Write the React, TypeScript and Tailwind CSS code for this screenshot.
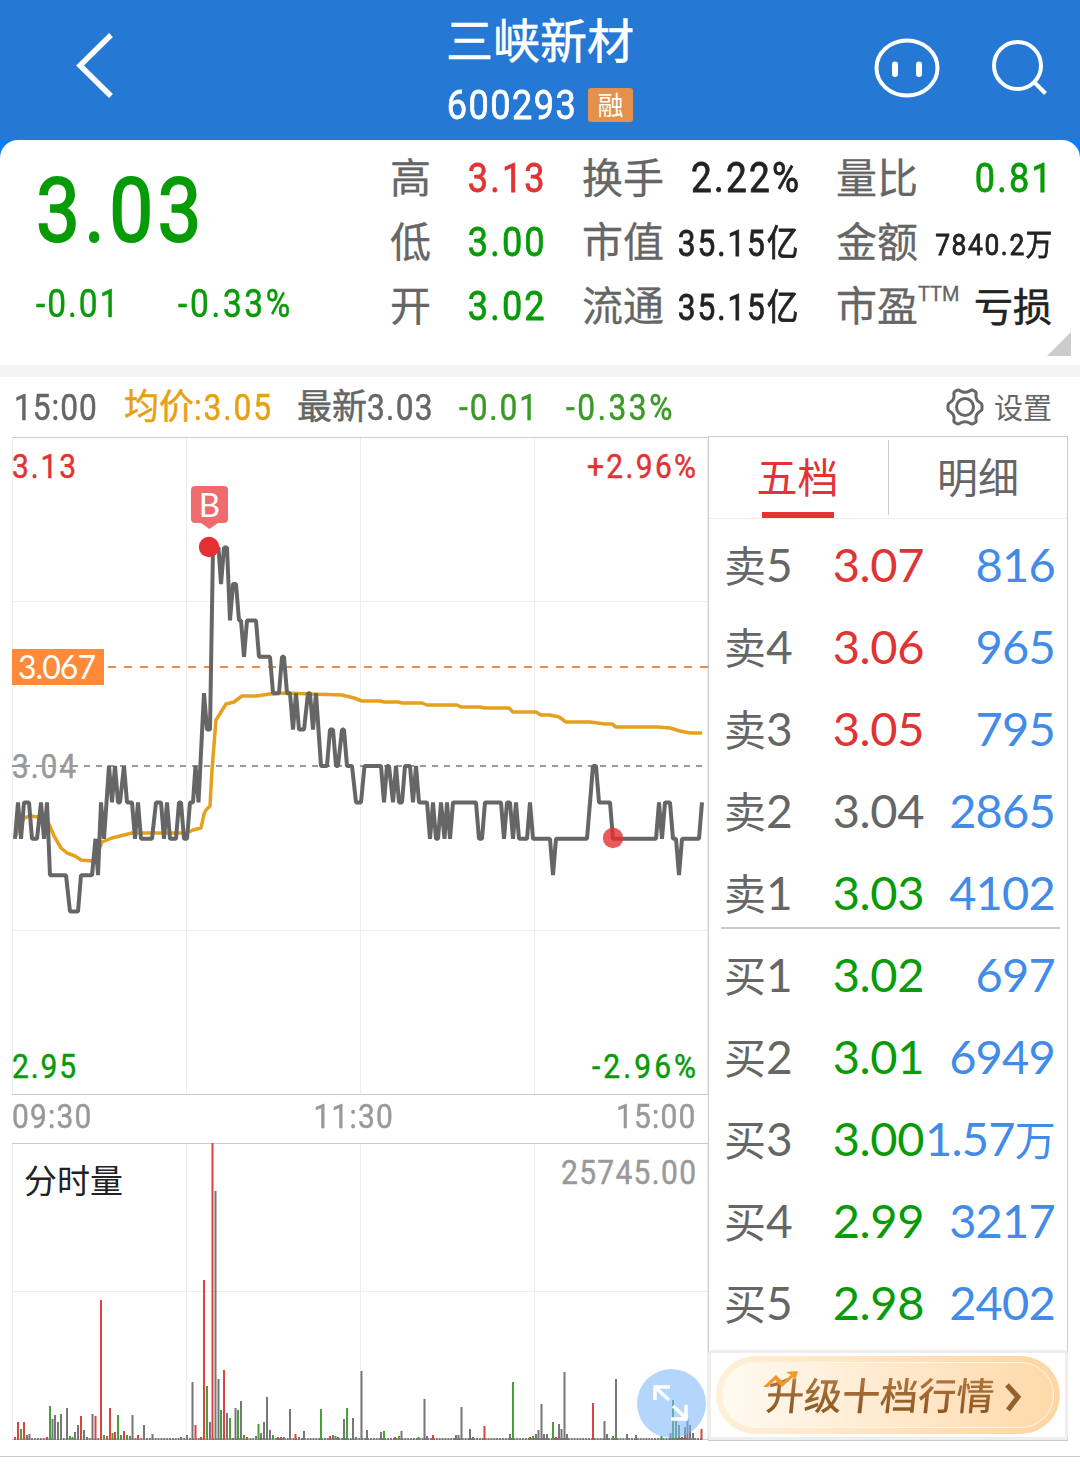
import React from 'react';

type Tone = 'up' | 'down' | 'flat';
type Bar = [number, number, 'r' | 'g' | 'k'];

interface Quote {
  label: string;
  level: string;
  price: string;
  tone: Tone;
  volume: string;
}

const toneClass: Record<Tone, string> = {
  up: 'text-[#e03333]',
  down: 'text-[#079b07]',
  flat: 'text-[#666666]',
};

const barColor = { r: '#dc4444', g: '#48a03c', k: '#777777' };

const sells: Quote[] = [
  { label: '卖', level: '5', price: '3.07', tone: 'up', volume: '816' },
  { label: '卖', level: '4', price: '3.06', tone: 'up', volume: '965' },
  { label: '卖', level: '3', price: '3.05', tone: 'up', volume: '795' },
  { label: '卖', level: '2', price: '3.04', tone: 'flat', volume: '2865' },
  { label: '卖', level: '1', price: '3.03', tone: 'down', volume: '4102' },
];

const buys: Quote[] = [
  { label: '买', level: '1', price: '3.02', tone: 'down', volume: '697' },
  { label: '买', level: '2', price: '3.01', tone: 'down', volume: '6949' },
  { label: '买', level: '3', price: '3.00', tone: 'down', volume: '1.57万' },
  { label: '买', level: '4', price: '2.99', tone: 'down', volume: '3217' },
  { label: '买', level: '5', price: '2.98', tone: 'down', volume: '2402' },
];

// [x, ticks above or below the previous close]
const prices: [number, number][] = [
  [15, -2], [18, -1], [21, -2], [24, -1], [29, -1], [32, -2], [37, -2], [41, -1], [44, -2], [47, -1],
  [50, -3], [66, -3], [70, -4], [78, -4], [81, -3], [92, -3], [95.5, -2], [98, -3], [101, -1], [104, -2],
  [109, 0], [112, -1], [115, 0], [118, -1], [120, -1], [124, 0], [127, -1], [132, -1], [135, -2], [138, -1],
  [141, -2], [152, -2], [156, -1], [161, -1], [164, -2], [167, -1], [170, -2], [176, -2], [179, -1], [181, -1],
  [184, -2], [187, -2], [190, -1], [193, -1], [195.5, 0], [198.5, -1], [204, 2], [207, 1], [210, 1], [213, 6],
  [218.5, 6], [221, 5], [224, 6], [227, 6], [230, 4], [233, 5], [236, 5], [239, 4], [241, 4], [244, 3],
  [247, 4], [256, 4], [259, 3], [270, 3], [273, 2], [279, 2], [282, 3], [284, 3], [287, 2], [290, 2],
  [293, 1], [296, 2], [299, 1], [304, 1], [308, 2], [310, 2], [313, 1], [316, 2], [321, 0], [327, 0],
  [330, 1], [333, 1], [336, 0], [338, 0], [342, 1], [344, 1], [347, 0], [352, 0], [356, -1], [361, -1],
  [364.5, 0], [381, 0], [384, -1], [387, 0], [389, 0], [393, -1], [396, 0], [399, -1], [402, -1], [405, 0],
  [410, 0], [413, -1], [416, 0], [419, -1], [427, -1], [430, -2], [433, -1], [436, -2], [438, -2], [441, -1],
  [444.5, -2], [447, -1], [450, -2], [453, -1], [476, -1], [479, -2], [482, -2], [485, -1], [501, -1], [504, -2],
  [507, -1], [510, -1], [513, -2], [516, -1], [519, -2], [527, -2], [530, -1], [533, -2], [550, -2], [553, -3],
  [556, -2], [587, -2], [593, 0], [596, 0], [599, -1], [610, -1], [613, -2], [656, -2], [659, -1], [662, -2],
  [665, -1], [670, -1], [673, -2], [676, -2], [679, -3], [682, -2], [699, -2], [702, -1],
];

const average =
  '15,837 24,818 30,816 38,817 46,817 54,836 61,848 67,853 75,856 81,860 92,861 96,858 102,842 112,838 120,836 132,833 187,833 193,830 201,828 204,814 206,810 210,806 212,770 216,720 221,712 226,704 234,702 242,696 256,696 270,694 285,693 310,694 342,695 354,698 362,701 380,701 384,702 398,702 402,703 422,703 427,705 457,705 461,707 480,707 485,708 509,708 513,712 536,712 541,715 550,715 559,717 566,722 590,722 605,724 612,724 616,727 658,727 670,728 680,731 690,733 702,733';

const volumes: Bar[] = [
  [15, 3, 'r'], [18, 18, 'r'], [21, 11, 'g'], [24, 18, 'r'], [27, 5, 'k'], [29.5, 6, 'k'], [47, 3, 'r'],
  [50, 34, 'g'], [52.5, 21, 'k'], [55, 25, 'k'], [58, 18, 'k'], [61, 26, 'k'], [67, 32, 'k'], [70, 4, 'g'],
  [72.5, 3, 'k'], [75, 8, 'k'], [78, 15, 'k'], [81, 24, 'r'], [84, 10, 'k'], [87, 3, 'k'], [92.5, 26, 'k'],
  [95.5, 24, 'r'], [101, 140, 'r'], [104, 5, 'g'], [107, 4, 'r'], [110, 32, 'r'], [112.5, 7, 'g'], [115, 8, 'r'],
  [118, 25, 'g'], [121, 5, 'k'], [124, 9, 'r'], [127, 5, 'g'], [130, 4, 'k'], [132.5, 25, 'k'], [138, 5, 'r'],
  [144, 15, 'k'], [152.5, 6, 'k'], [181, 3, 'k'], [187, 5, 'k'], [192.5, 58, 'k'], [195.5, 15, 'r'], [201, 3, 'r'],
  [204, 160, 'r'], [207, 54, 'g'], [210, 18, 'k'], [212.5, 297, 'r'], [215.5, 249, 'k'], [218.5, 61, 'k'],
  [221, 30, 'g'], [224, 70, 'r'], [227, 27, 'k'], [230, 22, 'g'], [232.5, 2, 'r'], [235.5, 32, 'k'], [238, 30, 'g'],
  [241, 39, 'k'], [244, 5, 'g'], [247, 3, 'r'], [256, 4, 'k'], [258.5, 16, 'g'], [261, 7, 'k'], [264, 18, 'k'],
  [267, 43, 'k'], [270, 10, 'k'], [273, 5, 'g'], [278, 3, 'k'], [281, 3, 'r'], [284, 3, 'k'], [290, 31, 'k'],
  [295.5, 6, 'r'], [299, 3, 'k'], [304, 9, 'k'], [321, 31, 'g'], [330, 4, 'r'], [333, 5, 'k'], [335.5, 4, 'g'],
  [338, 3, 'k'], [344, 21, 'k'], [347, 32, 'g'], [353, 22, 'k'], [356, 3, 'g'], [361.5, 69, 'k'], [367, 10, 'k'],
  [381, 8, 'k'], [384, 9, 'g'], [395, 3, 'r'], [399, 4, 'g'], [401.5, 9, 'k'], [418.5, 3, 'g'], [424.5, 41, 'k'],
  [427, 4, 'k'], [433, 5, 'r'], [456, 5, 'k'], [458.5, 5, 'k'], [461.5, 33, 'k'], [470, 11, 'k'], [473, 3, 'k'],
  [484.5, 14, 'r'], [510, 6, 'k'], [513, 58, 'g'], [530, 3, 'r'], [533, 4, 'g'], [536, 6, 'k'], [538.5, 10, 'k'],
  [541.5, 36, 'k'], [544, 6, 'k'], [547, 6, 'k'], [553, 18, 'g'], [556, 3, 'r'], [559, 16, 'k'], [561.5, 11, 'k'],
  [564.5, 68, 'k'], [567, 6, 'k'], [593, 37, 'r'], [604.5, 19, 'k'], [607, 6, 'k'], [613, 4, 'g'], [616, 61, 'k'],
  [627, 6, 'k'], [636, 5, 'k'], [661.5, 4, 'g'], [670.5, 7, 'k'], [673, 40, 'g'], [676, 21, 'k'], [679, 15, 'g'],
  [682, 3, 'r'], [685, 13, 'k'], [687.5, 21, 'k'], [690, 15, 'k'], [693, 7, 'k'], [701.5, 11, 'r'],
];

const Header = () => (
  <header className="h-[140px] bg-[#2578d4] text-white flex justify-between">
    <button className="w-[200px] pl-[72px] pt-[30px] flex items-start">
      <svg width="46" height="72" viewBox="0 0 46 72" fill="none" stroke="white" strokeWidth="5.500">
        <path d="M39 5 L8 35.5 L39 66" />
      </svg>
    </button>
    <div className="flex flex-col items-center pt-[18px]">
      <h1 className="text-[47px] leading-[48px] [-webkit-text-stroke:0.6px]">三峡新材</h1>
      <div className="flex items-center gap-[11px] mt-[14px]">
        <span className="-ml-[18px] origin-right scale-x-88 text-[41px] leading-[50px] tracking-[0.04em] [-webkit-text-stroke:0.8px]">600293</span>
        <span className="w-[45px] h-[34px] rounded-[3px] bg-[#e3914c] text-[26px] leading-[36px] text-center">融</span>
      </div>
    </div>
    <div className="w-[200px] flex items-start gap-[50px] pt-9">
      <svg className="-ml-[7px] shrink-0" width="68" height="64" viewBox="0 0 68 64" fill="none" stroke="white" strokeLinecap="round">
        <ellipse cx="34" cy="32" rx="30.5" ry="27.5" strokeWidth="4" />
        <path d="M22 28.500v9.500M46 28.500v9.500" strokeWidth="6" />
      </svg>
      <svg className="shrink-0" width="58" height="62" viewBox="0 0 58 62" fill="none" stroke="white" strokeWidth="4">
        <circle cx="26.500" cy="29.500" r="23.500" />
        <path d="M43 46l11.500 11.500" />
      </svg>
    </div>
  </header>
);

interface StatProps {
  label: string;
  sup?: string;
  children: React.ReactNode;
}

const Stat: React.FC<StatProps> = ({ label, sup, children }) => (
  <div className="h-16 flex items-center justify-between [-webkit-text-stroke:0.6px]">
    <span className="text-[41px] text-[#666666] relative pt-[3px] [-webkit-text-stroke:0.3px]">
      {label}
      {sup && <sup className="absolute left-full top-0 text-[20px] leading-none">{sup}</sup>}
    </span>
    {children}
  </div>
);

// Condensed figures, anchored to the right edge of their cell
const Num: React.FC<{ className: string; children: React.ReactNode }> = ({ className, children }) => (
  <span className={`-ml-8 -mr-[0.05em] origin-right scale-x-88 tracking-[0.06em] [-webkit-text-stroke:0.8px] ${className}`}>{children}</span>
);

const Summary = () => (
  <div className="bg-[#0b7dfb]">
    <section className="relative h-[225px] rounded-t-[18px] bg-white flex leading-none whitespace-nowrap">
      <div className="w-[390px] pl-[36px] pt-[24px] text-[#079b07]">
        <div className="origin-left scale-x-88 w-[190px] text-[89px] leading-[94px] tracking-[0.055em] [-webkit-text-stroke:2px]">3.03</div>
        <div className="mt-[25px] flex text-[38px] leading-[42px] [-webkit-text-stroke:0.5px]">
          <span className="w-[142px] origin-left scale-x-88 tracking-[0.06em]">-0.01</span>
          <span className="origin-left scale-x-88 tracking-[0.08em]">-0.33%</span>
        </div>
      </div>
      <div className="w-[155px] pt-1.5">
        <Stat label="高"><Num className="text-[41px] text-[#e03333]">3.13</Num></Stat>
        <Stat label="低"><Num className="text-[41px] text-[#079b07]">3.00</Num></Stat>
        <Stat label="开"><Num className="text-[41px] text-[#079b07]">3.02</Num></Stat>
      </div>
      <div className="w-[217px] ml-[37px] pt-1.5 text-[#222222]">
        <Stat label="换手"><Num className="text-[42px]">2.22%</Num></Stat>
        <Stat label="市值"><Num className="text-[36px] pt-1">35.15亿</Num></Stat>
        <Stat label="流通"><Num className="text-[36px] pt-1">35.15亿</Num></Stat>
      </div>
      <div className="w-[216px] ml-[37px] pt-1.5 text-[#222222]">
        <Stat label="量比"><Num className="text-[41px] text-[#079b07]">0.81</Num></Stat>
        <Stat label="金额"><Num className="text-[30px] pt-1.5">7840.2万</Num></Stat>
        <Stat label="市盈" sup="TTM"><span className="text-[39px] pt-1">亏损</span></Stat>
      </div>
      <svg className="absolute right-[9px] bottom-[9px]" width="24" height="24" viewBox="0 0 24 24">
        <path d="M24 0v24H0z" fill="#cccccc" />
      </svg>
    </section>
  </div>
);

const InfoBar = () => (
  <div className="h-[59px] pt-0.5 pl-3.5 pr-[28px] flex items-center text-[36px] leading-none text-[#666666] whitespace-nowrap [-webkit-text-stroke:0.5px]">
    <span className="w-[110px] origin-left scale-x-88 tracking-[0.03em]">15:00</span>
    <span className="w-[173px] flex text-[#e8a010]">
      <span className="text-[35px]">均价</span>
      <span className="origin-left scale-x-88 tracking-[0.06em]">:3.05</span>
    </span>
    <span className="w-[162px] flex">
      <span className="text-[35px]">最新</span>
      <span className="origin-left scale-x-88 tracking-[0.04em]">3.03</span>
    </span>
    <span className="w-[107px] origin-left scale-x-88 tracking-[0.06em] text-[#3a9a26]">-0.01</span>
    <span className="origin-left scale-x-88 tracking-[0.08em] text-[#3a9a26]">-0.33%</span>
    <button className="ml-auto flex items-center gap-2.5 text-[29px] text-[#666666] [-webkit-text-stroke:0px]">
      <svg className="-mt-0.5" width="38" height="38" viewBox="0 0 38 38" fill="none" stroke="#666666" strokeWidth="3" strokeLinejoin="round">
        <path d="M10.500 2.500 Q12 1.500 14 2.700 Q19 6 24 2.700 Q26 1.500 27.500 2.500 L29.500 3.700 Q30.500 4.700 30 7 Q29.500 12 34 14.500 Q36 15.500 36 17 V21 Q36 22.500 34 23.500 Q29.500 26 30 31 Q30.500 33.300 29.500 34.300 L27.500 35.500 Q26 36.500 24 35.300 Q19 32 14 35.300 Q12 36.500 10.500 35.500 L8.500 34.300 Q7.500 33.300 8 31 Q8.500 26 4 23.500 Q2 22.500 2 21 V17 Q2 15.500 4 14.500 Q8.500 12 8 7 Q7.500 4.700 8.500 3.700 Z" />
        <circle cx="19" cy="19" r="8.500" />
      </svg>
      <span className="pt-1">设置</span>
    </button>
  </div>
);

interface AxisTextProps {
  x: number;
  y: number;
  width: number;
  fill: string;
  children: string;
}

const AxisText: React.FC<AxisTextProps> = ({ x, y, width, fill, children }) => (
  <text transform={`translate(${x} ${y}) scale(0.88 1)`} fontSize="34" fill={fill} stroke={fill} strokeWidth="0.5" textLength={width / 0.88}>
    {children}
  </text>
);

const PriceChart = () => (
  <svg className="block" width="697" height="660" viewBox="12 436 697 660" fill="none">
    <path d="M12 601.500H708M12 930.500H708M186.500 438V1094M360.500 438V1094M534.500 438V1094M12.500 438V1094M707.500 438V1094" stroke="#eeeeee" />
    <path d="M12 437.500H708M12 1094.500H708" stroke="#cccccc" />
    <AxisText x={12} y={778} width={64} fill="#999999">3.04</AxisText>
    <AxisText x={12} y={478} width={64} fill="#e03333">3.13</AxisText>
    <AxisText x={587} y={478} width={109} fill="#e03333">+2.96%</AxisText>
    <AxisText x={12} y={1078} width={64} fill="#079b07">2.95</AxisText>
    <AxisText x={592} y={1078} width={104} fill="#079b07">-2.96%</AxisText>
    <path d="M12 766H703" stroke="#999999" strokeWidth="2" strokeDasharray="6 6" />
    <path d="M108 667H708" stroke="#f08b45" strokeWidth="2" strokeDasharray="8 8" />
    <polyline points={average} stroke="#e5a11d" strokeWidth="3.500" strokeLinejoin="round" />
    <polyline
      points={prices.map(([x, tick]) => `${x},${766 - tick * 36.4}`).join(' ')}
      stroke="#666666"
      strokeWidth="4"
      strokeLinejoin="bevel"
    />
    <rect x="12" y="649" width="92" height="36" fill="#ff8a3a" />
    <text x="18" y="679" fontSize="32" fill="white" textLength="78" className="font-[family-name:Lato,sans-serif]">3.067</text>
    <rect x="191" y="486" width="37" height="37" rx="4" fill="#ee6c6e" />
    <path d="M201 523h17l-8.500 6z" fill="#ee6c6e" />
    <text x="209.500" y="517" fontSize="33" fill="white" textAnchor="middle" className="font-[family-name:Lato,sans-serif]">B</text>
    <circle cx="209" cy="547" r="10.200" fill="#e62f32" />
    <circle cx="613" cy="838" r="10.200" fill="#e62f32" fillOpacity="0.800" />
  </svg>
);

const VolumeChart = () => (
  <svg className="block" width="697" height="298" viewBox="12 1143 697 298" fill="none">
    <path d="M12 1291.500H708M186.500 1144V1440M360.500 1144V1440M534.500 1144V1440M12.500 1144V1440M707.500 1144V1440" stroke="#eeeeee" />
    <path d="M12 1143.500H708M12 1439.500H708" stroke="#cccccc" />
    <text x="24" y="1193" fontSize="33" fill="#222222">分时量</text>
    <AxisText x={561} y={1184} width={135} fill="#999999">25745.00</AxisText>
    <path d="M14 1439H703" stroke="#777777" strokeWidth="2" strokeDasharray="2 0.870" />
    {volumes.map(([x, h, color]) => (
      <rect key={x} x={x - 1} y={1440 - h} width="2" height={h} fill={barColor[color]} />
    ))}
    <circle cx="671.500" cy="1403.500" r="34.500" fill="#7db9fb" fillOpacity="0.580" />
    <path d="M669 1400L655 1387M655 1400V1387H670M673 1406L687 1419M671 1419H686V1405" stroke="white" strokeWidth="3.500" />
  </svg>
);

const QuoteRow: React.FC<{ quote: Quote }> = ({ quote }) => (
  <div className="h-[82px] pb-[3px] flex items-center leading-none font-[family-name:Lato,'Noto_Sans_CJK_SC',sans-serif]">
    <span className="w-[84px] text-[42px] text-[#666666]">
      {quote.label}<span className="text-[46px]">{quote.level}</span>
    </span>
    <span className={`w-[116px] text-right text-[47px] tracking-[-0.4px] ${toneClass[quote.tone]}`}>{quote.price}</span>
    <span className="flex-1 flex justify-end items-baseline text-[47px] tracking-[-0.8px] text-[#428ce8]">
      {quote.volume.replace('万', '')}
      {quote.volume.endsWith('万') && <span className="text-[41px]">万</span>}
    </span>
  </div>
);

const UpgradeButton = () => (
  <button className="mt-auto -mx-px h-[90px] border-3 border-[#eeeeee] rounded-sm p-[3px] pl-[5px] pr-[5px] bg-white">
    <span className="h-[78px] rounded-full bg-linear-to-r from-[#fff0d9] to-[#ffd5a3] p-1.5 flex">
      <span className="flex-1 rounded-full border border-[#fff8ea] bg-linear-to-r from-[#fffaf1] to-[#ffd9aa] flex items-center pl-[43px]">
        <span className="relative pt-1">
          <span className="block -skew-x-6 text-[38px] leading-[40px] font-medium text-transparent bg-clip-text bg-linear-to-b from-[#b07840] to-[#895421]">升级十档行情</span>
          <svg className="absolute -left-1 -top-[3px]" width="38" height="20" viewBox="0 0 38 20">
            <path d="M1 17L14 5L21 12L29 5L24 2L36 1L33 11L31 7L20 17L13 10L6 17z" fill="#f3972b" />
          </svg>
        </span>
        <svg className="ml-2.5 mt-1" width="20" height="30" viewBox="0 0 20 30" fill="none">
          <path d="M3 3L14 15L4 28" stroke="#94602c" strokeWidth="5" />
        </svg>
      </span>
    </span>
  </button>
);

const OrderBook = () => (
  <aside className="w-[360px] h-[1005px] border border-[#cccccc] flex flex-col">
    <div className="h-[82px] shrink-0 border-b border-[#eeeeee] flex text-[41px] leading-none">
      <div className="w-[177px] pt-[3px] flex flex-col items-center justify-between text-[#e63232]">
        <span className="mt-[19px]">五档</span>
        <span className="w-[72px] h-1.5 bg-[#e63232]" />
      </div>
      <div className="my-[3px] ml-0.5 w-px bg-[#cccccc]" />
      <div className="flex-1 pt-[22px] text-center text-[#666666]">明细</div>
    </div>
    <div className="pt-1.5 pl-[15px] pr-3">
      {sells.map((q) => <QuoteRow key={q.level} quote={q} />)}
      <div className="-mt-2 mb-1.5 -ml-[3px] -mr-[5px] h-0.5 bg-[#cccccc]" />
      {buys.map((q) => <QuoteRow key={q.level} quote={q} />)}
    </div>
    <UpgradeButton />
  </aside>
);

const App: React.FC = () => {
  return (
    <div className="w-[1080px] h-[1476px] bg-white overflow-hidden font-[family-name:Roboto,'Noto_Sans_CJK_SC',sans-serif]">
      <Header />
      <Summary />
      <div className="h-3 bg-[#f4f4f4]" />
      <InfoBar />
      <main className="h-[1020px] pl-3 flex items-start">
        <div className="w-[696px] shrink-0">
          <PriceChart />
          <div className="h-[47px] pr-3 flex justify-between pt-0.5 text-[34px] leading-[36px] tracking-[0.04em] text-[#999999] [-webkit-text-stroke:0.5px]">
            <span className="origin-left scale-x-88">09:30</span>
            <span className="scale-x-88">11:30</span>
            <span className="origin-right scale-x-88">15:00</span>
          </div>
          <VolumeChart />
        </div>
        <OrderBook />
      </main>
      <div className="h-px bg-[#c8c8c8]" />
    </div>
  );
};

export default App;
